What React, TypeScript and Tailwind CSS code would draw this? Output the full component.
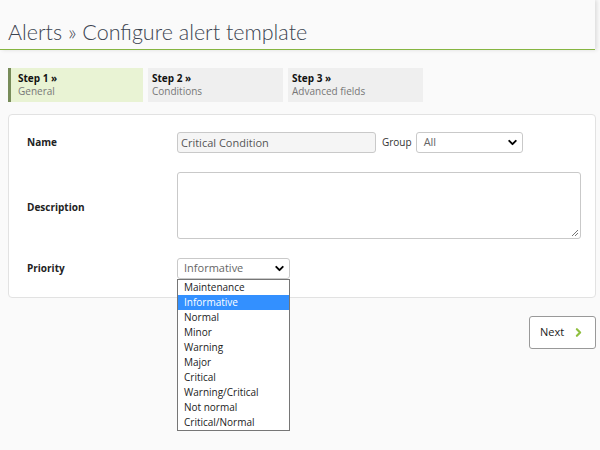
import { ChevronDown, ChevronRight } from 'lucide-react';

const priorities = [
  'Maintenance',
  'Informative',
  'Normal',
  'Minor',
  'Warning',
  'Major',
  'Critical',
  'Warning/Critical',
  'Not normal',
  'Critical/Normal',
];

function Step({ n, label, active }: { n: number; label: string; active?: boolean }) {
  return (
    <div
      className={
        active
          ? 'w-[135px] h-[34px] bg-[#e9f3d4] border-l-[3px] border-[#788c5a] pl-[7px] pt-[4px]'
          : 'w-[135px] h-[34px] bg-[#efefef] pl-[4px] pt-[4px]'
      }
    >
      <div className="text-[10px] leading-[13px] font-bold text-[#111]">Step {n} »</div>
      <div className="text-[10px] leading-[13px] text-[#777]">{label}</div>
    </div>
  );
}

export default function App() {
  return (
    <div className="min-h-[450px] w-[600px] bg-[#fafafa] font-['Open_Sans',sans-serif] text-[#333] overflow-hidden">
      <div className="w-[595px] h-[50px] bg-[#fafafa] border-b border-[#86b541] shadow-[2px_0_4px_rgba(0,0,0,0.12)] flex items-end pl-2 pb-[2px]">
        <h1 className="font-['Lato',sans-serif] font-light text-[21.5px] leading-[30px] text-[#3b4450]">
          Alerts » Configure alert template
        </h1>
      </div>

      <div className="flex gap-[5px] ml-2 mt-[18px]">
        <Step n={1} label="General" active />
        <Step n={2} label="Conditions" />
        <Step n={3} label="Advanced fields" />
      </div>

      <div className="mx-2 mt-3 w-[588px] bg-white border border-[#e2e2e2] rounded-[4px] pt-[17px] pb-[18px] pl-[18px] pr-[14px]">
        <div className="grid grid-cols-[150px_1fr] gap-y-[19px] items-center">
          <div className="text-[10px] font-bold text-[#222]">Name</div>
          <div className="flex items-center">
            <div className="w-[199px] h-[21px] bg-[#f5f5f5] border border-[#c9c9c9] rounded-[3px] px-[3px] text-[11px] leading-[19px] text-[#555]">
              Critical Condition
            </div>
            <span className="ml-[6px] text-[10px] text-[#333]">Group</span>
            <div className="ml-[4px] w-[107px] h-[21px] bg-white border border-[#c9c9c9] rounded-[3px] pl-[7px] pr-[3px] flex items-center justify-between text-[11px] text-[#666]">
              <span>All</span>
              <ChevronDown size={13} strokeWidth={3.5} className="text-black" />
            </div>
          </div>

          <div className="text-[10px] font-bold text-[#222] pt-[4px]">Description</div>
          <div className="relative w-[404px] h-[67px] bg-white border border-[#c9c9c9] rounded-[3px]">
            <svg className="absolute right-[1px] bottom-[1px]" width="9" height="9" viewBox="0 0 9 9">
              <path d="M8 2 L2 8 M8 5 L5 8" stroke="#777" strokeWidth="1" />
            </svg>
          </div>

          <div className="text-[10px] font-bold text-[#222]">Priority</div>
          <div className="relative w-[113px]">
            <div className="w-[113px] h-[21px] bg-white border border-[#c9c9c9] rounded-[3px] pl-[6px] pr-[3px] flex items-center justify-between text-[11px] text-[#666]">
              <span>Informative</span>
              <ChevronDown size={13} strokeWidth={3.5} className="text-black" />
            </div>
            <div className="absolute left-0 top-[21px] w-[113px] bg-white border border-[#767676] z-10">
              {priorities.map((p) => (
                <div
                  key={p}
                  className={
                    p === 'Informative'
                      ? 'h-[15px] px-[6px] text-[10px] leading-[15px] bg-[#3390ff] text-white'
                      : 'h-[15px] px-[6px] text-[10px] leading-[15px] text-[#222]'
                  }
                >
                  {p}
                </div>
              ))}
            </div>
          </div>
        </div>
      </div>

      <div className="flex justify-end mr-1 mt-[18px]">
        <button className="w-[67px] h-[33px] bg-white border border-[#999] rounded-[3px] flex items-center justify-center gap-[8px] text-[11px] text-[#222]">
          <span>Next</span>
          <ChevronRight size={13} strokeWidth={4} className="text-[#8fbf3f]" />
        </button>
      </div>
    </div>
  );
}
